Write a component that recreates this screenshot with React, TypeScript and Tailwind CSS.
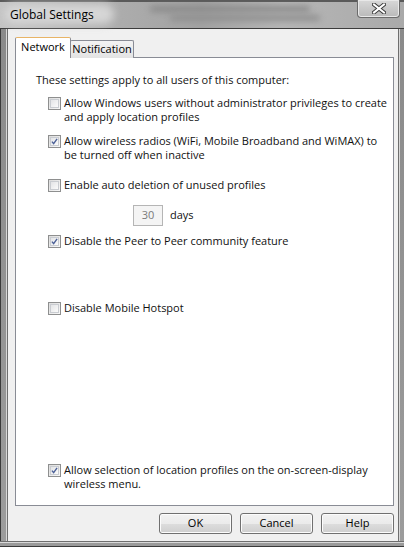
import React from "react";

const font = { fontFamily: '"Open Sans", "Liberation Sans", Arial, sans-serif' };

function Check({ checked }: { checked?: boolean }) {
  return (
    <span className="mt-[1px] flex h-[13px] w-[13px] shrink-0 items-center justify-center border border-[#8e8f8f] bg-[linear-gradient(135deg,#dcdcdc,#f8f8f8)]">
      <span className="flex h-[9px] w-[9px] items-center justify-center border border-[#c9ccd1] bg-[linear-gradient(135deg,#e3e4e6,#fbfbfb)]">
        {checked && (
          <svg width="9" height="9" viewBox="0 0 9 9">
            <path d="M1.2 4.6 L3.4 7.2 L7.8 1.2" fill="none" stroke="#4a5f97" strokeWidth="1.8" />
          </svg>
        )}
      </span>
    </span>
  );
}

function Row({ checked, children }: { checked?: boolean; children: React.ReactNode }) {
  return (
    <div className="flex items-start gap-[3px] pl-[12px]">
      <Check checked={checked} />
      <div className="text-[11px] leading-[14px] text-[#111]">{children}</div>
    </div>
  );
}

function Btn({ label }: { label: string }) {
  return (
    <button className="h-[21px] w-[73px] rounded-[3px] border border-[#707070] bg-[linear-gradient(#f2f2f2_0%,#ebebeb_50%,#dddddd_51%,#cfcfcf_100%)] text-[11px] text-black shadow-[inset_0_0_0_1px_#fcfcfc]">
      {label}
    </button>
  );
}

export default function App() {
  return (
    <div className="relative flex h-[547px] w-[404px] flex-col overflow-hidden bg-[#9a9a9a]" style={font}>
      {/* title bar */}
      <div className="relative h-[29px] shrink-0 border-b border-[#3c3c3c] bg-[linear-gradient(90deg,#c4c4c4_0%,#acacac_30%,#a2a2a2_50%,#b6b6b6_70%,#a9a9a9_100%)]">
        <div className="absolute inset-x-0 top-0 h-[2px] bg-[#5a5a5a]" />
        <div className="absolute left-[150px] top-[6px] h-[6px] w-[160px] rounded-full bg-[#8a8a8a] blur-[3px]" />
        <div className="absolute left-[170px] top-[15px] h-[6px] w-[150px] rounded-full bg-[#8f8f8f] blur-[3px]" />
        <div className="absolute left-[4px] top-[4px] h-[20px] w-[110px] rounded-full bg-[#d6d6d6] blur-[4px]" />
        <span className="absolute left-[10px] top-[6px] text-[12px] text-black">Global Settings</span>
        <div className="absolute right-[4px] top-0 flex h-[18px] w-[43px] items-center justify-center rounded-b-[4px] border border-t-0 border-[#6b6b6b] bg-[linear-gradient(#d8d8d8,#b9b9b9)] shadow-[inset_0_0_0_1px_#e8e8e8]">
          <svg width="14" height="11" viewBox="0 0 14 11">
            <path d="M2 1.5 L12 9.5 M12 1.5 L2 9.5" stroke="#3a3a3a" strokeWidth="4" strokeLinecap="square" />
            <path d="M2 1.5 L12 9.5 M12 1.5 L2 9.5" stroke="#ffffff" strokeWidth="2" strokeLinecap="square" />
          </svg>
        </div>
      </div>

      <div className="flex flex-1">
        {/* left frame */}
        <div className="flex w-[8px] shrink-0">
          <div className="w-[1px] bg-[#3a3a3a]" />
          <div className="w-[5px] bg-[linear-gradient(#8a8a8a,#9c9c9c)]" />
          <div className="w-[1px] bg-[#d8d8d8]" />
          <div className="w-[1px] bg-[#6e6e6e]" />
        </div>

        {/* client */}
        <div className="flex flex-1 flex-col bg-[#f0f0f0] pl-[7px] pr-[4px] pt-[8px]">
          {/* tabs */}
          <div className="relative z-10 flex h-[21px] items-end">
            <div className="flex h-[21px] w-[56px] items-center justify-center rounded-t-[2px] border border-b-0 border-[#898c95] border-t-[#e8b466] bg-white pb-[2px] text-[11px] text-black">
              Network
            </div>
            <div className="-ml-[1px] flex h-[18px] w-[64px] items-center justify-center rounded-t-[2px] border border-b-0 border-[#898c95] bg-[linear-gradient(#f3f3f3,#e3e3e3)] text-[11px] text-black">
              Notification
            </div>
          </div>

          {/* panel */}
          <div className="-mt-[1px] flex h-[449px] w-[379px] flex-col border border-[#898c95] bg-white pl-[20px] pt-[15px] pb-[14px]">
            <div className="text-[11px] leading-[14px] text-[#111]">These settings apply to all users of this computer:</div>
            <div className="mt-[9px]">
              <Row>
                Allow Windows users without administrator privileges to create
                <br />
                and apply location profiles
              </Row>
            </div>
            <div className="mt-[10px]">
              <Row checked>
                Allow wireless radios (WiFi, Mobile Broadband and WiMAX) to
                <br />
                be turned off when inactive
              </Row>
            </div>
            <div className="mt-[16px]">
              <Row>Enable auto deletion of unused profiles</Row>
            </div>
            <div className="mt-[13px] flex items-center gap-[7px] pl-[97px]">
              <div className="flex h-[21px] w-[30px] items-center justify-center border border-[#b5b5b5] bg-[#f4f4f4] text-[11px] text-[#7a7a7a]">
                30
              </div>
              <span className="text-[11px] text-[#111]">days</span>
            </div>
            <div className="mt-[8px]">
              <Row checked>Disable the Peer to Peer community feature</Row>
            </div>
            <div className="mt-[53px]">
              <Row>Disable Mobile Hotspot</Row>
            </div>
            <div className="mt-auto">
              <Row checked>
                Allow selection of location profiles on the on-screen-display
                <br />
                wireless menu.
              </Row>
            </div>
          </div>

          {/* buttons */}
          <div className="mt-[7px] flex w-[379px] justify-end gap-[8px]">
            <Btn label="OK" />
            <Btn label="Cancel" />
            <Btn label="Help" />
          </div>
        </div>

        {/* right frame */}
        <div className="flex w-[7px] shrink-0">
          <div className="w-[1px] bg-[#6e6e6e]" />
          <div className="w-[1px] bg-[#d8d8d8]" />
          <div className="w-[4px] bg-[linear-gradient(#8a8a8a,#9c9c9c)]" />
          <div className="w-[1px] bg-[#3a3a3a]" />
        </div>
      </div>

      {/* bottom frame */}
      <div className="flex h-[6px] shrink-0 flex-col">
        <div className="h-[1px] bg-[#6e6e6e]" />
        <div className="h-[1px] bg-[#d8d8d8]" />
        <div className="flex-1 bg-[#9a9a9a]" />
        <div className="h-[1px] bg-[#3a3a3a]" />
      </div>
    </div>
  );
}
